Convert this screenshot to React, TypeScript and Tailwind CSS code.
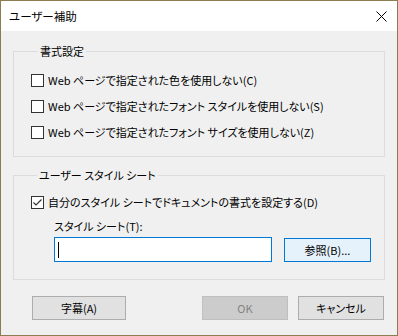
const font = "font-['Noto_Sans_CJK_JP','Noto_Sans',sans-serif] [font-feature-settings:'palt']"

function CheckBox({ checked, label }: { checked?: boolean; label: string }) {
  return (
    <div className="flex h-[26px] items-center">
      <div className="flex h-[13px] w-[13px] items-center justify-center border border-[#333333] bg-white">
        {checked && (
          <svg width="11" height="11" viewBox="0 0 11 11" fill="none">
            <path d="M1.5 5.5 L4 8 L9.5 2.5" stroke="#333333" strokeWidth="1.2" />
          </svg>
        )}
      </div>
      <span className="ml-[4px] text-[11px] leading-[16px] text-black">{label}</span>
    </div>
  )
}

function Button({ children, className }: { children: React.ReactNode; className?: string }) {
  return (
    <button
      className={
        "flex h-[24px] items-center justify-center border text-[11px] leading-[16px] " + (className ?? "")
      }
    >
      {children}
    </button>
  )
}

export default function App() {
  return (
    <div className={`flex h-[336px] w-[398px] flex-col border border-[#8b7c52] ${font}`}>
      {/* Title bar */}
      <div className="flex h-[30px] items-center justify-between bg-white pl-[8px] pr-[10px]">
        <span className="text-[11.5px] leading-[16px] text-black">ユーザー補助</span>
        <svg width="11" height="11" viewBox="0 0 11 11" fill="none">
          <path d="M0.5 0.5 L10.5 10.5 M10.5 0.5 L0.5 10.5" stroke="#000000" strokeWidth="1" />
        </svg>
      </div>

      {/* Body */}
      <div className="flex flex-1 flex-col bg-[#f0f0f0] px-[12px]">
        <fieldset className="mt-[12px] border border-[#dcdcdc] pb-[11px] pl-[17px]">
          <legend className="ml-[7px] px-[2px] text-[11px] leading-[16px] text-black">書式設定</legend>
          <div className="mt-[8px]">
            <CheckBox label="Web ページで指定された色を使用しない(C)" />
            <CheckBox label="Web ページで指定されたフォント スタイルを使用しない(S)" />
            <CheckBox label="Web ページで指定されたフォント サイズを使用しない(Z)" />
          </div>
        </fieldset>

        <fieldset className="mt-[10px] border border-[#dcdcdc] pb-[17px] pl-[17px]">
          <legend className="ml-[6px] px-[2px] text-[11px] leading-[16px] text-black">ユーザー スタイル シート</legend>
          <div className="mt-[6px]">
            <CheckBox checked label="自分のスタイル シートでドキュメントの書式を設定する(D)" />
          </div>
          <div className="ml-[23px] mt-[3px] text-[11px] leading-[16px] text-black">スタイル シート(T):</div>
          <div className="ml-[23px] mt-[3px] flex items-start">
            <div className="flex h-[25px] w-[218px] items-center border border-[#0078d7] bg-white pl-[3px]">
              <div className="h-[16px] w-[1px] bg-black" />
            </div>
            <Button className="ml-[12px] mt-[1px] w-[87px] border-[#0078d7] bg-[#e5f1fb] text-black">
              参照(B)...
            </Button>
          </div>
        </fieldset>

        <div className="mt-[16px] flex pl-[19px] pr-[1px]">
          <Button className="w-[94px] border-[#adadad] bg-[#e1e1e1] text-black">字幕(A)</Button>
          <div className="flex-1" />
          <Button className="w-[86px] border-[#bfbfbf] bg-[#cccccc] text-[#838383]">OK</Button>
          <Button className="ml-[10px] w-[86px] border-[#adadad] bg-[#e1e1e1] text-black">キャンセル</Button>
        </div>
      </div>
    </div>
  )
}
